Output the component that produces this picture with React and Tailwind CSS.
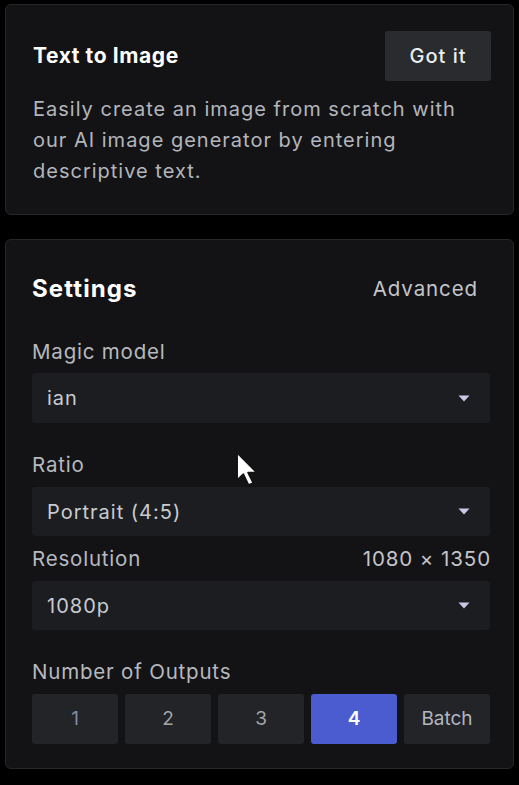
import React from "react";

function Caret() {
  return (
    <svg width="12" height="7" viewBox="0 0 12 7" className="shrink-0">
      <path d="M0.5 0.5 H11.5 L6 6.5 Z" fill="#c9c9e6" />
    </svg>
  );
}

function Select({ value, h }) {
  return (
    <div
      className={
        "flex items-center justify-between rounded-[3px] bg-[#1c1d21] pl-[15px] pr-[20px] " +
        (h === 49 ? "h-[49px]" : "h-[50px]")
      }
    >
      <span className="text-[20px] tracking-[1px] text-[#c9cbd0]">{value}</span>
      <Caret />
    </div>
  );
}

function Label({ children, right }) {
  return (
    <div className="flex items-center justify-between h-[28px] text-[20.5px] tracking-[0.8px] text-[#b6b9bf]">
      <span>{children}</span>
      {right && <span className="text-[#c3c5ca] tracking-[0.9px] -mr-[1px]">{right}</span>}
    </div>
  );
}

export default function App() {
  const outputs = [
    { t: "1", c: "text-[#7f8ea6]" },
    { t: "2", c: "text-[#a4a6ab]" },
    { t: "3", c: "text-[#a4a6ab]" },
    { t: "4", c: "text-white", active: true },
    { t: "Batch", c: "text-[#b2b6c0]" },
  ];
  return (
    <div
      className="relative min-h-[785px] w-[519px] bg-black px-[5px] pt-[4px]"
      style={{ fontFamily: "Inter, 'Noto Sans', sans-serif" }}
    >
      {/* Card 1 */}
      <div className="h-[211px] rounded-[6px] border border-[#26272a] bg-[#131315] pl-[27px] pr-[22px] pt-[26px]">
        <div className="flex items-center justify-between h-[50px]">
          <span className="text-[21px] font-bold text-white tracking-[0.6px]">Text to Image</span>
          <button className="h-[50px] w-[106px] rounded-[3px] bg-[#2a2b2e] text-[20px] tracking-[1px] text-[#eceef0] font-medium">
            Got it
          </button>
        </div>
        <p className="mt-[13px] text-[20px] tracking-[1px] leading-[31px] text-[#b3b6bc] w-[440px]">
          Easily create an image from scratch with our AI image generator by entering descriptive text.
        </p>
      </div>

      {/* Card 2 */}
      <div className="mt-[24px] h-[530px] rounded-[6px] border border-[#26272a] bg-[#131315] pl-[26px] pr-[23px] pt-[35px]">
        <div className="flex items-center justify-between h-[28px] pr-[12px]">
          <span className="text-[24px] font-bold text-white tracking-[1.1px]">Settings</span>
          <span className="text-[20.5px] tracking-[0.9px] text-[#c3c5ca]">Advanced</span>
        </div>

        <div className="mt-[35px]">
          <Label>Magic model</Label>
          <div className="mt-[7px]">
            <Select value="ian" />
          </div>
        </div>

        <div className="mt-[28px]">
          <Label>Ratio</Label>
          <div className="mt-[8px]">
            <Select value="Portrait (4:5)" h={49} />
          </div>
        </div>

        <div className="mt-[9px]">
          <Label right="1080 × 1350">Resolution</Label>
          <div className="mt-[8px]">
            <Select value="1080p" h={49} />
          </div>
        </div>

        <div className="mt-[28px]">
          <Label>Number of Outputs</Label>
          <div className="mt-[8px] grid grid-cols-5 gap-[7px]">
            {outputs.map((o) => (
              <div
                key={o.t}
                className={
                  "flex h-[50px] items-center justify-center rounded-[3px] text-[19px] " +
                  (o.active ? "bg-[#4a5cd0] font-semibold " : "bg-[#222427] ") +
                  o.c
                }
              >
                {o.t}
              </div>
            ))}
          </div>
        </div>
      </div>

      {/* mouse cursor */}
      <svg
        className="absolute left-[235px] top-[451px]"
        width="27"
        height="37"
        viewBox="0 0 26 36"
      >
        <path
          d="M2 2 L2 28 L8 22.5 L13 33 L17.5 31 L12.5 21 L21 21 Z"
          fill="#ffffff"
          stroke="#111"
          strokeWidth="1.5"
          strokeLinejoin="round"
        />
      </svg>
    </div>
  );
}
